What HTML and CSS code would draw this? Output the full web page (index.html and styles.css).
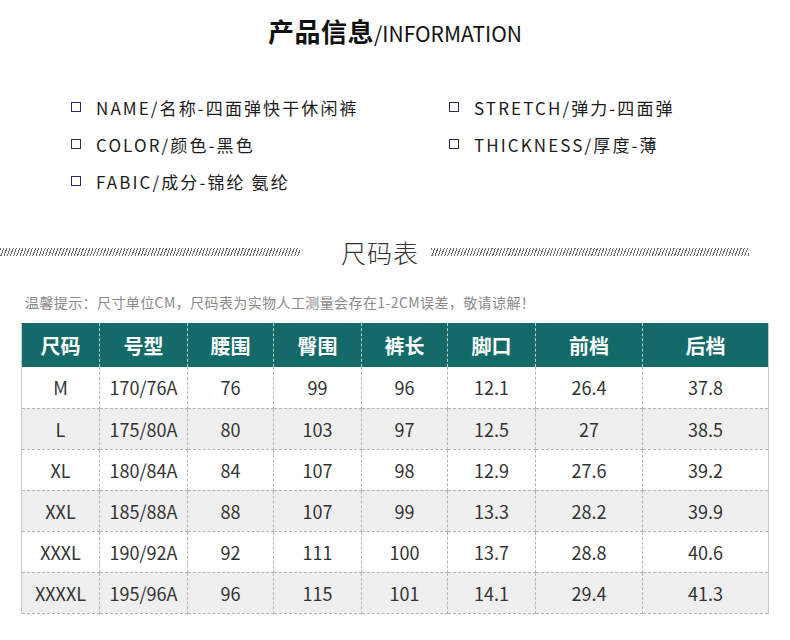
FILE: index.html
```html
<!DOCTYPE html>
<html lang="zh-CN">
<head>
<meta charset="utf-8">
<title>产品信息</title>
<link rel="stylesheet" href="styles.css">
</head>
<body>
<div class="page">
  <h1 class="title"><span class="title-cn">产品信息</span><span class="title-en">/INFORMATION</span></h1>

  <div class="info">
    <div class="info-col">
      <div class="info-item"><span class="box"></span><span>NAME/名称-四面弹快干休闲裤</span></div>
      <div class="info-item"><span class="box"></span><span>COLOR/颜色-黑色</span></div>
      <div class="info-item"><span class="box"></span><span>FABIC/成分-锦纶 氨纶</span></div>
    </div>
    <div class="info-col right">
      <div class="info-item"><span class="box"></span><span>STRETCH/弹力-四面弹</span></div>
      <div class="info-item"><span class="box"></span><span>THICKNESS/厚度-薄</span></div>
    </div>
  </div>

  <div class="divider">
    <span class="hatch hatch-left"></span>
    <span class="divider-text">尺码表</span>
    <span class="hatch hatch-right"></span>
  </div>

  <p class="note">温馨提示：尺寸单位CM，尺码表为实物人工测量会存在1-2CM误差，敬请谅解！</p>

  <table class="size-table">
    <colgroup>
      <col class="c1"><col class="c2"><col class="c3"><col class="c4"><col class="c5"><col class="c6"><col class="c7"><col class="c8">
    </colgroup>
    <thead>
      <tr><th>尺码</th><th>号型</th><th>腰围</th><th>臀围</th><th>裤长</th><th>脚口</th><th>前档</th><th>后档</th></tr>
    </thead>
    <tbody>
      <tr><td>M</td><td>170/76A</td><td>76</td><td>99</td><td>96</td><td>12.1</td><td>26.4</td><td>37.8</td></tr>
      <tr class="alt"><td>L</td><td>175/80A</td><td>80</td><td>103</td><td>97</td><td>12.5</td><td>27</td><td>38.5</td></tr>
      <tr><td>XL</td><td>180/84A</td><td>84</td><td>107</td><td>98</td><td>12.9</td><td>27.6</td><td>39.2</td></tr>
      <tr class="alt"><td>XXL</td><td>185/88A</td><td>88</td><td>107</td><td>99</td><td>13.3</td><td>28.2</td><td>39.9</td></tr>
      <tr><td>XXXL</td><td>190/92A</td><td>92</td><td>111</td><td>100</td><td>13.7</td><td>28.8</td><td>40.6</td></tr>
      <tr class="alt"><td>XXXXL</td><td>195/96A</td><td>96</td><td>115</td><td>101</td><td>14.1</td><td>29.4</td><td>41.3</td></tr>
    </tbody>
  </table>
</div>
</body>
</html>
```

FILE: styles.css
```css
* { box-sizing: border-box; }
html, body { margin: 0; padding: 0; background: #fff; }
body {
  width: 790px;
  font-family: "Noto Sans CJK SC", "Noto Sans", sans-serif;
  color: #222;
}
.page { padding-top: 9px; }

.title {
  margin: 0;
  text-align: center;
  line-height: 38px;
  height: 38px;
  font-weight: normal;
  color: #111;
}
.title-cn { font-size: 26px; font-weight: 700; letter-spacing: 0.5px; }
.title-en { font-size: 21px; font-weight: 400; }

.info {
  display: flex;
  margin-top: 48px;
  padding-left: 71px;
}
.info-col {
  width: 378px;
  flex: none;
  display: flex;
  flex-direction: column;
  gap: 13px;
}
.info-col.right {
  width: auto;
  flex: 1;
}
.info-item {
  display: flex;
  align-items: center;
  height: 24px;
  font-size: 17px;
  letter-spacing: 2.1px;
  color: #1c1c1c;
}
.box {
  width: 10px;
  height: 10px;
  border: 1.5px solid #2c2a60;
  margin-right: 15px;
  flex: none;
}

.divider {
  display: flex;
  align-items: center;
  margin-top: 42px;
  height: 34px;
}
.hatch {
  height: 8px;
  background: repeating-linear-gradient(110deg, #6e6e6e 0 1px, transparent 1px 3px);
}
.hatch-left { width: 300px; margin-right: 41px; }
.hatch-right { width: 318px; margin-left: 12px; }
.divider-text {
  font-size: 25px;
  font-weight: 300;
  color: #333;
  letter-spacing: 1px;
  line-height: 34px;
}

.note {
  margin: 23px 0 0 25px;
  font-size: 14px;
  letter-spacing: 0.4px;
  line-height: 20px;
  color: #8a8a8a;
}

.size-table {
  margin: 11px 0 0 21px;
  width: 747px;
  border-collapse: collapse;
  table-layout: fixed;
  border-left: 1px solid #c8c8c8;
  border-right: 1px solid #c8c8c8;
}
.c1 { width: 78px; }
.c2 { width: 88px; }
.c3 { width: 86px; }
.c4 { width: 88px; }
.c5 { width: 86px; }
.c6 { width: 88px; }
.c7 { width: 107px; }
.c8 { width: 126px; }

.size-table th {
  background: #136a69;
  color: #fff;
  font-size: 20px;
  font-weight: 700;
  height: 44px;
  padding: 0;
  text-align: center;
  border-left: 1px dashed #b9d0cf;
}
.size-table th:first-child { border-left: none; }
.size-table td {
  height: 41px;
  padding: 0;
  text-align: center;
  font-size: 18px;
  color: #333;
  border: 1px dashed #b4b4b4;
}
.size-table td:first-child { border-left: 1px solid #c8c8c8; }
.size-table td:last-child { border-right: 1px solid #c8c8c8; }
.size-table tbody tr:first-child td { border-top: none; }
.size-table tr.alt td { background: #efefef; }
```
